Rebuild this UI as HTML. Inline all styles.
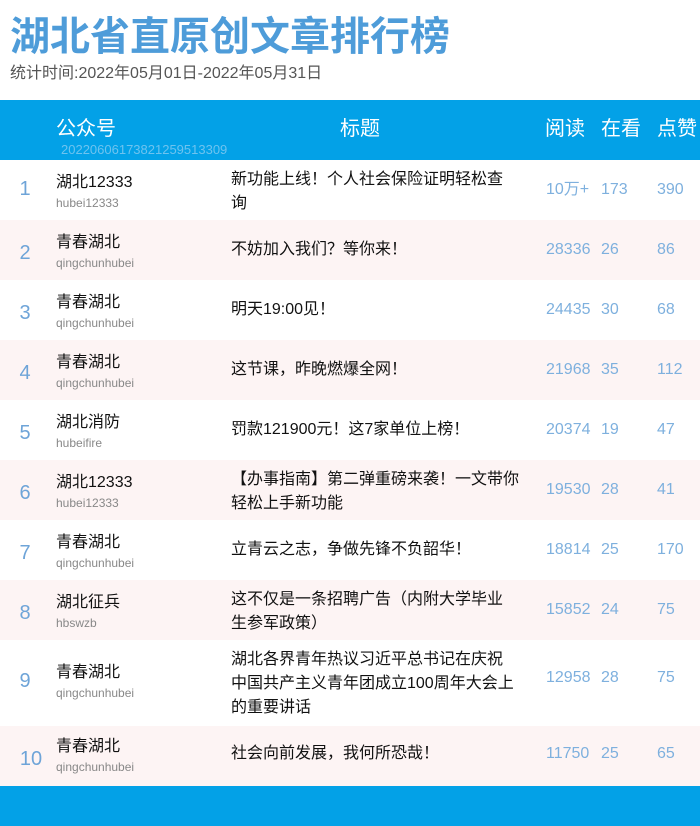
<!DOCTYPE html>
<html><head><meta charset="utf-8"><style>
*{margin:0;padding:0;box-sizing:border-box}
body{width:700px;height:826px;overflow:hidden;background:#fff;font-family:"Liberation Sans","Noto Sans CJK SC",sans-serif;position:relative}
.t{position:absolute;left:10px;top:12px;font-size:40px;font-weight:bold;color:#4e9cd9;line-height:50px;white-space:nowrap}
.s{position:absolute;left:10px;top:63px;font-size:16px;color:#555;line-height:22px}
.hd{position:absolute;left:0;top:100px;width:700px;height:60px;background:#03a1e7;color:#fff;font-size:20px}
.hd span{position:absolute;top:16px;line-height:26px}
.hd .id{top:42px;font-size:13px;color:#6ec3ef;line-height:16px;left:61px}
.r{position:absolute;left:0;width:700px;height:60px}
.r.p{background:#fdf4f4}
.r div{position:absolute;white-space:nowrap}
.n{left:0;width:50px;text-align:center;font-size:20px;color:#6ea4d8}
.nm{left:56px;font-size:16px;color:#111;line-height:20px}
.nm small{display:block;font-size:12px;color:#888;line-height:20px}
.r .ti{left:231px;width:292px;font-size:16px;color:#111;line-height:24px;white-space:normal}
.r .v{font-size:16px;color:#7eb0de;line-height:20px}
.ft{position:absolute;left:0;top:786px;width:700px;height:40px;background:#03a1e7}
</style></head><body>
<div class="t">湖北省直原创文章排行榜</div>
<div class="s">统计时间:2022年05月01日-2022年05月31日</div>
<div class="hd"><span style="left:56px">公众号</span><span style="left:340px">标题</span><span style="left:545px">阅读</span><span style="left:601px">在看</span><span style="left:657px">点赞</span><span class="id">20220606173821259513309</span></div>

<div class="r" style="top:160px"><div class="n" style="top:18px">1</div><div class="nm" style="top:13px">湖北12333<small>hubei12333</small></div><div class="ti" style="top:8px;width:278px">新功能上线！个人社会保险证明轻松查询</div><div class="v" style="left:546px;top:20px">10万+</div><div class="v" style="left:601px;top:20px">173</div><div class="v" style="left:657px;top:20px">390</div></div>
<div class="r p" style="top:220px"><div class="n" style="top:22px">2</div><div class="nm" style="top:13px">青春湖北<small>qingchunhubei</small></div><div class="ti" style="top:18px">不妨加入我们？等你来！</div><div class="v" style="left:546px;top:20px">28336</div><div class="v" style="left:601px;top:20px">26</div><div class="v" style="left:657px;top:20px">86</div></div>
<div class="r" style="top:280px"><div class="n" style="top:22px">3</div><div class="nm" style="top:13px">青春湖北<small>qingchunhubei</small></div><div class="ti" style="top:18px">明天19:00见！</div><div class="v" style="left:546px;top:20px">24435</div><div class="v" style="left:601px;top:20px">30</div><div class="v" style="left:657px;top:20px">68</div></div>
<div class="r p" style="top:340px"><div class="n" style="top:22px">4</div><div class="nm" style="top:13px">青春湖北<small>qingchunhubei</small></div><div class="ti" style="top:18px">这节课，昨晚燃爆全网！</div><div class="v" style="left:546px;top:20px">21968</div><div class="v" style="left:601px;top:20px">35</div><div class="v" style="left:657px;top:20px">112</div></div>
<div class="r" style="top:400px"><div class="n" style="top:22px">5</div><div class="nm" style="top:13px">湖北消防<small>hubeifire</small></div><div class="ti" style="top:18px">罚款121900元！这7家单位上榜！</div><div class="v" style="left:546px;top:20px">20374</div><div class="v" style="left:601px;top:20px">19</div><div class="v" style="left:657px;top:20px">47</div></div>
<div class="r p" style="top:460px"><div class="n" style="top:22px">6</div><div class="nm" style="top:13px">湖北12333<small>hubei12333</small></div><div class="ti" style="top:8px">【办事指南】第二弹重磅来袭！一文带你轻松上手新功能</div><div class="v" style="left:546px;top:20px">19530</div><div class="v" style="left:601px;top:20px">28</div><div class="v" style="left:657px;top:20px">41</div></div>
<div class="r" style="top:520px"><div class="n" style="top:22px">7</div><div class="nm" style="top:13px">青春湖北<small>qingchunhubei</small></div><div class="ti" style="top:18px">立青云之志，争做先锋不负韶华！</div><div class="v" style="left:546px;top:20px">18814</div><div class="v" style="left:601px;top:20px">25</div><div class="v" style="left:657px;top:20px">170</div></div>
<div class="r p" style="top:580px"><div class="n" style="top:22px">8</div><div class="nm" style="top:13px">湖北征兵<small>hbswzb</small></div><div class="ti" style="top:8px;width:278px">这不仅是一条招聘广告（内附大学毕业生参军政策）</div><div class="v" style="left:546px;top:20px">15852</div><div class="v" style="left:601px;top:20px">24</div><div class="v" style="left:657px;top:20px">75</div></div>
<div class="r" style="top:640px;height:86px"><div class="n" style="top:30px">9</div><div class="nm" style="top:23px">青春湖北<small>qingchunhubei</small></div><div class="ti" style="top:8px;width:286px">湖北各界青年热议习近平总书记在庆祝中国共产主义青年团成立100周年大会上的重要讲话</div><div class="v" style="left:546px;top:28px">12958</div><div class="v" style="left:601px;top:28px">28</div><div class="v" style="left:657px;top:28px">75</div></div>
<div class="r p" style="top:726px"><div class="n" style="top:22px;left:6px">10</div><div class="nm" style="top:11px">青春湖北<small>qingchunhubei</small></div><div class="ti" style="top:16px">社会向前发展，我何所恐哉！</div><div class="v" style="left:546px;top:18px">11750</div><div class="v" style="left:601px;top:18px">25</div><div class="v" style="left:657px;top:18px">65</div></div>
<div class="ft"></div>
</body></html>
